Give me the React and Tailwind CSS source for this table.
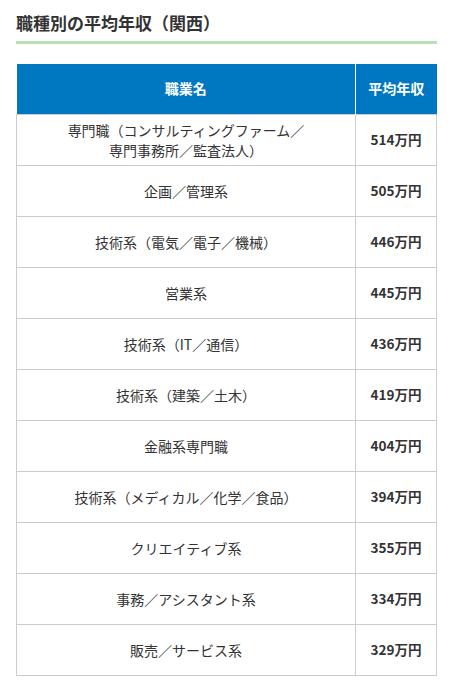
const rows = [
  { name: ['専門職（コンサルティングファーム／', '専門事務所／監査法人）'], pay: '514万円' },
  { name: ['企画／管理系'], pay: '505万円' },
  { name: ['技術系（電気／電子／機械）'], pay: '446万円' },
  { name: ['営業系'], pay: '445万円' },
  { name: ['技術系（IT／通信）'], pay: '436万円' },
  { name: ['技術系（建築／土木）'], pay: '419万円' },
  { name: ['金融系専門職'], pay: '404万円' },
  { name: ['技術系（メディカル／化学／食品）'], pay: '394万円' },
  { name: ['クリエイティブ系'], pay: '355万円' },
  { name: ['事務／アシスタント系'], pay: '334万円' },
  { name: ['販売／サービス系'], pay: '329万円' },
];

export default function App() {
  return (
    <div
      className="min-h-[688px] bg-white px-4 pt-[11px] text-[#333]"
      style={{ fontFamily: '"Noto Sans CJK JP", "Noto Sans", sans-serif' }}
    >
      <h2 className="border-b-[3px] border-[#b7e0b4] pb-[6px] text-[17px] font-bold leading-[24px] text-[#333]">
        職種別の平均年収（関西）
      </h2>

      <table className="mt-[20px] w-full border-collapse text-[14px]">
        <thead>
          <tr className="h-[50px] bg-[#0078c1] text-white">
            <th className="w-[339px] border-r border-white font-bold">職業名</th>
            <th className="font-bold">平均年収</th>
          </tr>
        </thead>
        <tbody>
          {rows.map((row) => (
            <tr key={row.pay} className="h-[51px]">
              <td className="border border-[#ccc] px-2 text-center leading-[20px]">
                {row.name.map((line) => (
                  <div key={line}>{line}</div>
                ))}
              </td>
              <td className="border border-[#ccc] text-center text-[13.5px] font-bold">{row.pay}</td>
            </tr>
          ))}
        </tbody>
      </table>
    </div>
  );
}
